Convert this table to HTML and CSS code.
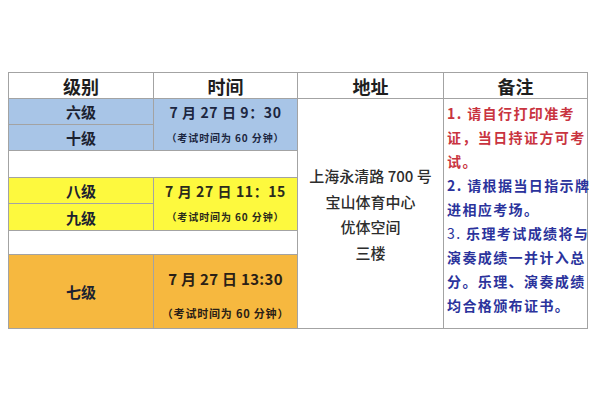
FILE: index.html
```html
<!DOCTYPE html>
<html lang="zh-CN">
<head>
<meta charset="utf-8">
<link rel="stylesheet" href="styles.css">
</head>
<body>
<div class="page">
  <div class="table">
    <div class="cell head c1">级别</div>
    <div class="cell head c2">时间</div>
    <div class="cell head c3">地址</div>
    <div class="cell head c4">备注</div>

    <div class="cell grade blue r1">六级</div>
    <div class="cell time blue t1">
      <div class="tmain">7 月 27 日 9：30</div>
      <div class="tsub">（考试时间为 60 分钟）</div>
    </div>
    <div class="cell addr">
      <div>上海永清路 700 号</div>
      <div>宝山体育中心</div>
      <div>优体空间</div>
      <div>三楼</div>
    </div>
    <div class="cell notes">
      <div class="red">1. 请自行打印准考</div>
      <div class="red">证，当日持证方可考</div>
      <div class="red">试。</div>
      <div class="navy">2. 请根据当日指示牌</div>
      <div class="navy">进相应考场。</div>
      <div class="navy"><span class="lite">3.</span> 乐理考试成绩将与</div>
      <div class="navy">演奏成绩一并计入总</div>
      <div class="navy">分。乐理、演奏成绩</div>
      <div class="navy">均合格颁布证书。</div>
    </div>
    <div class="cell grade blue r2">十级</div>

    <div class="cell blank b1"></div>

    <div class="cell grade yellow r3">八级</div>
    <div class="cell time yellow t2">
      <div class="tmain">7 月 27 日 11：15</div>
      <div class="tsub">（考试时间为 60 分钟）</div>
    </div>
    <div class="cell grade yellow r4">九级</div>

    <div class="cell blank b2"></div>

    <div class="cell grade orange r5">七级</div>
    <div class="cell time orange t3">
      <div class="tmain big">7 月 27 日 13:30</div>
      <div class="tsub big">（考试时间为 60 分钟）</div>
    </div>
  </div>
</div>
</body>
</html>
```

FILE: styles.css
```css
html, body {
  margin: 0;
  padding: 0;
  background: #ffffff;
}
body {
  font-family: "Noto Sans CJK SC", "Noto Sans", sans-serif;
  font-weight: 700;
  color: #222;
}
.page {
  padding: 72px 0 0 8px;
}
.table {
  display: grid;
  width: 578px;
  grid-template-columns: 144px 143px 145px 143px;
  grid-template-rows: 25px 25px 25px 26px 25px 26px 23px 73px;
  gap: 1px;
  padding: 1px;
  background: #a3a3a3;
}
.cell {
  background: #ffffff;
  display: flex;
  flex-direction: column;
  align-items: center;
  justify-content: center;
  white-space: nowrap;
}
.head {
  font-size: 18px;
  color: #1e1e1e;
  grid-row: 1;
}
.c1 { grid-column: 1; }
.c2 { grid-column: 2; }
.c3 { grid-column: 3; }
.c4 { grid-column: 4; }

.blue { background: #a8c5e7; }
.yellow { background: #fdf93e; }
.orange { background: #f6b83f; }

.grade {
  grid-column: 1;
  font-size: 15px;
  color: #1c2230;
}
.r1 { grid-row: 2; }
.r2 { grid-row: 3; }
.r3 { grid-row: 5; }
.r4 { grid-row: 6; }
.r5 { grid-row: 8; }

.time { grid-column: 2; }
.t1 { grid-row: 2 / 4; color: #1c2640; }
.t2 { grid-row: 5 / 7; color: #2a2a1c; }
.t3 { grid-row: 8; color: #2a2016; padding-top: 8px; }

.tmain {
  font-size: 14px;
  line-height: 25px;
  letter-spacing: 0.6px;
}
.tsub {
  font-size: 10px;
  line-height: 25px;
  letter-spacing: 0.9px;
}
.tmain.big {
  font-size: 15px;
  line-height: 34px;
  letter-spacing: 0.3px;
}
.tsub.big {
  font-size: 11px;
  line-height: 34px;
  letter-spacing: 0.8px;
}

.blank { grid-column: 1 / 3; }
.b1 { grid-row: 4; }
.b2 { grid-row: 7; }

.addr {
  grid-column: 3;
  grid-row: 2 / 9;
  font-size: 15px;
  line-height: 25.5px;
  color: #2c2c2c;
  font-weight: 500;
  padding-top: 1px;
}

.notes {
  grid-column: 4;
  grid-row: 2 / 9;
  align-items: flex-start;
  justify-content: flex-start;
  padding: 2px 0 0 3px;
  font-size: 14px;
  letter-spacing: 1.4px;
  line-height: 24px;
}
.red { color: #c9343f; }
.navy { color: #2b339c; }
.lite { font-weight: 400; }
```
